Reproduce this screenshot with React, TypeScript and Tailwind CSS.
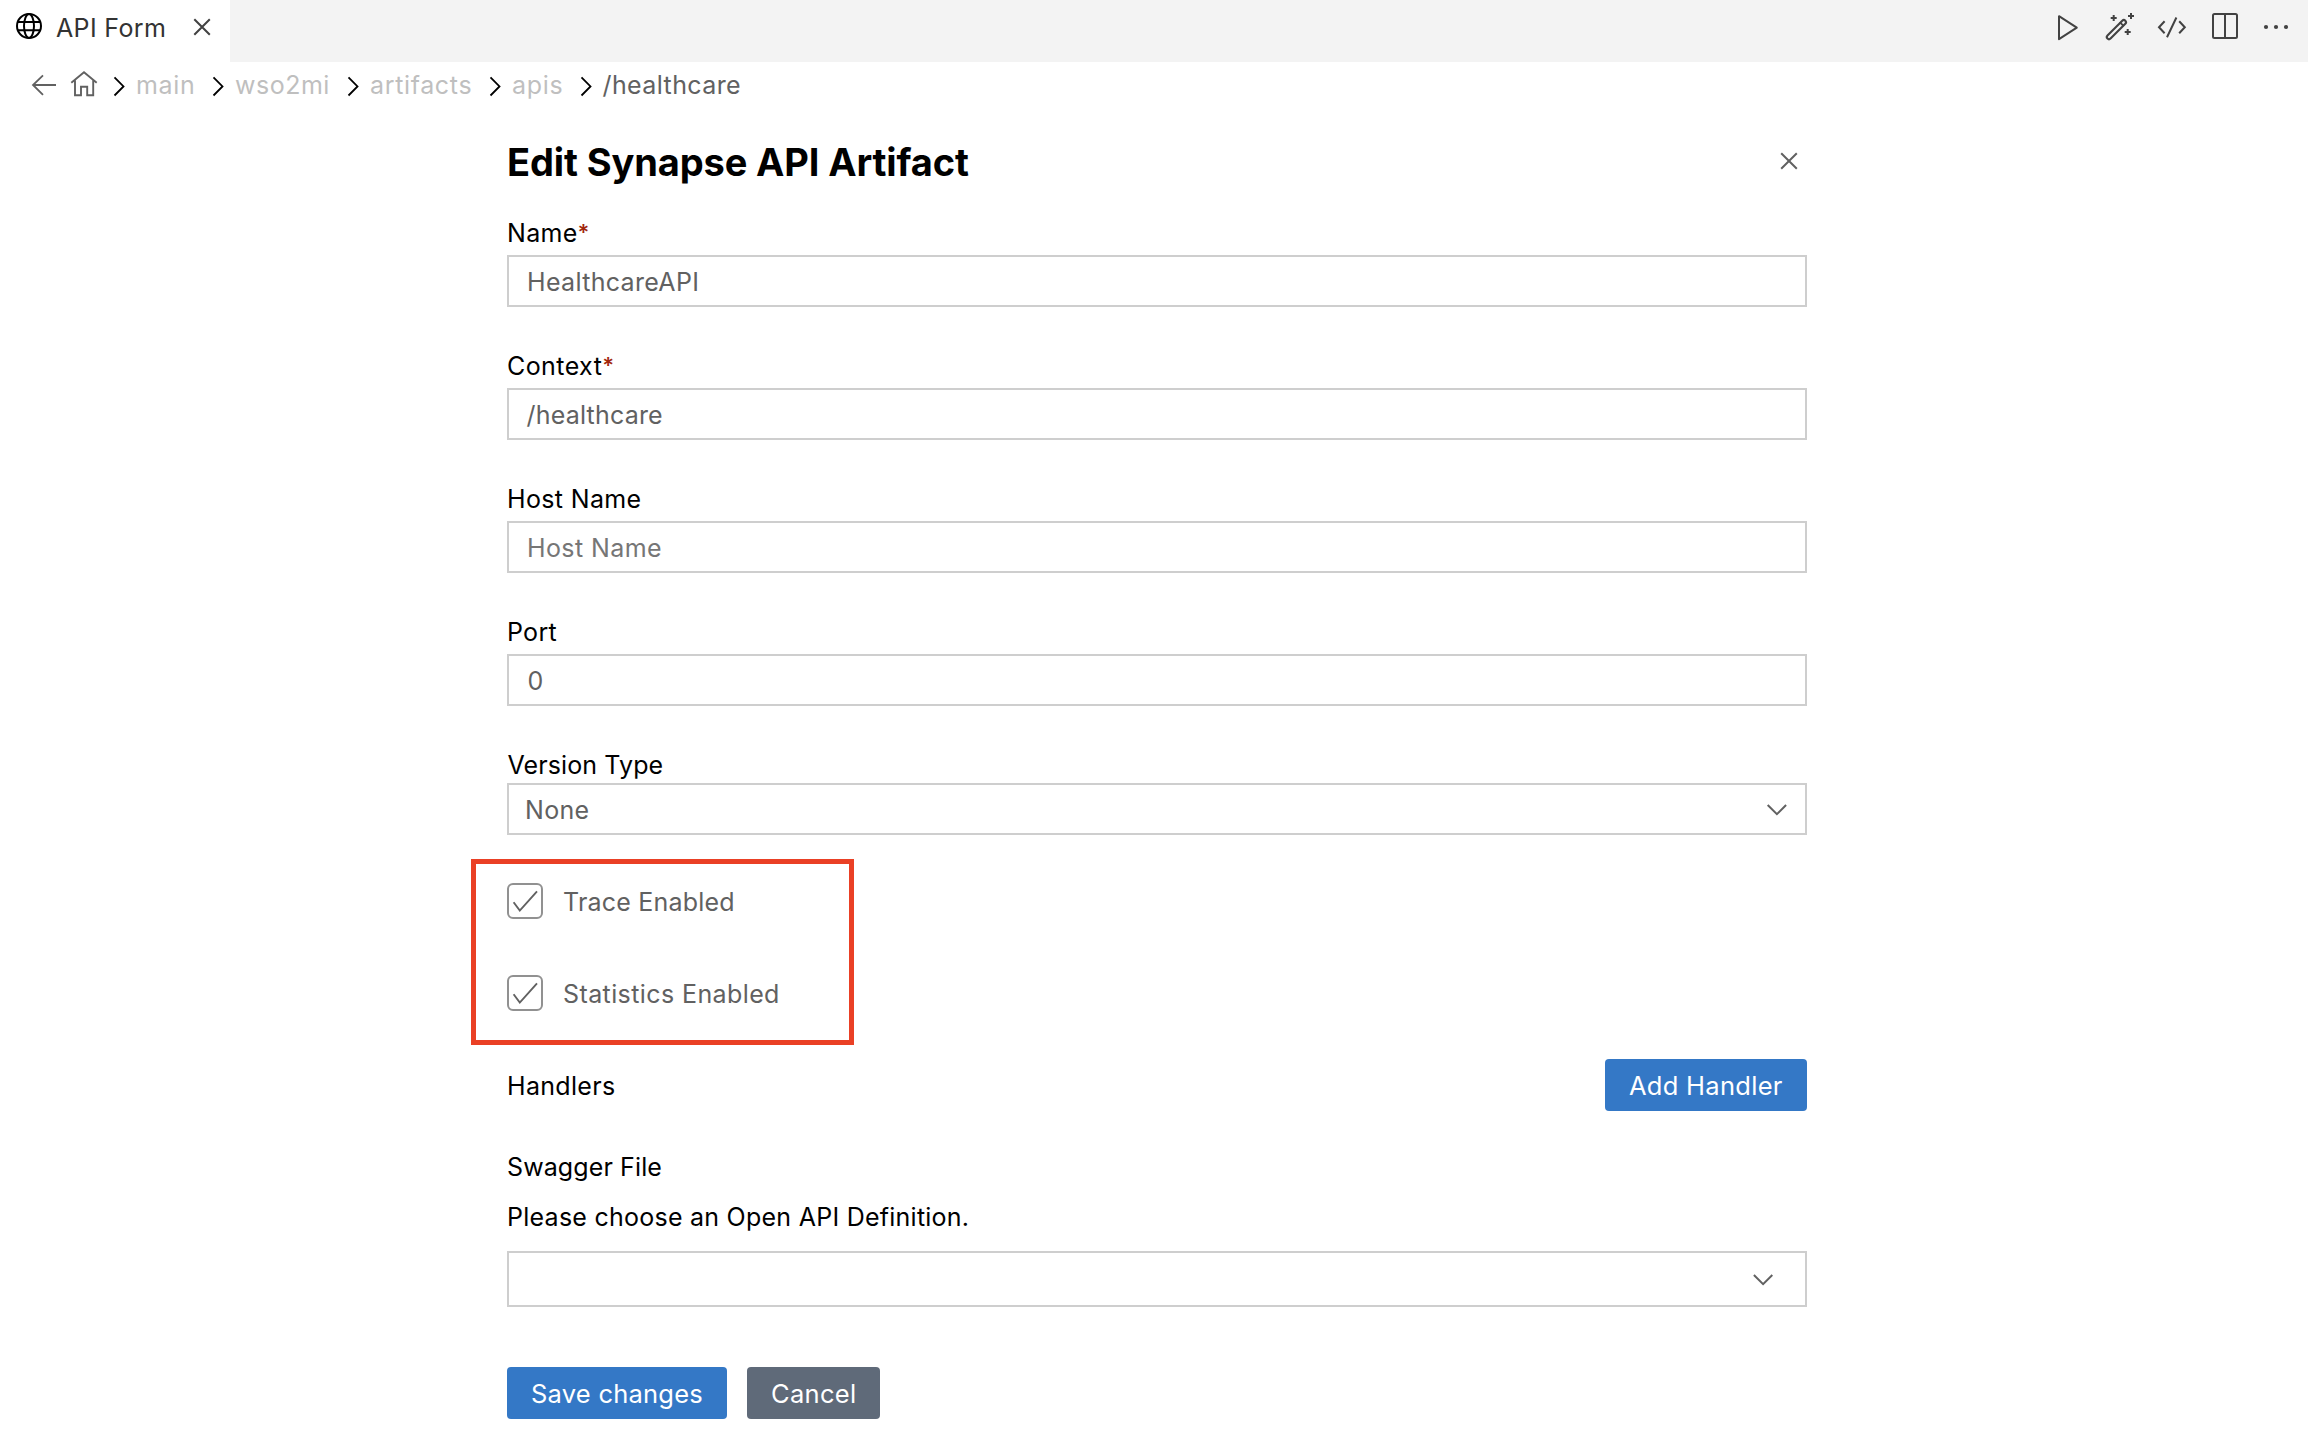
import type { ReactNode } from "react";

type IconProps = { box: string; w?: string; children: ReactNode };

// Line icon with the editor's two-pixel stroke.
function Icon({ box, w = "h-8 w-8", children }: IconProps) {
  return (
    <svg viewBox={box} className={`${w} shrink-0`} fill="none" stroke="currentColor" strokeWidth="2">
      {children}
    </svg>
  );
}

function Tab() {
  return (
    <div className="flex h-full w-[230px] items-start bg-white">
      <div className="ml-[13px] mt-[10px] text-black">
        <Icon box="13 10 32 32">
          <circle cx="29" cy="26" r="12" />
          <ellipse cx="29" cy="26" rx="5" ry="12" />
          <path d="M17.6 22h22.8M17.6 30.3h22.8" />
        </Icon>
      </div>
      <span className="ml-[11px] mt-3 w-[130px] leading-8 tracking-[0.35px] text-[#333333]">API Form</span>
      <div className="mt-[11px] text-[#424242]">
        <Icon box="186 11 32 32">
          <path d="M194.3 19.3l15.5 15.5M209.8 19.3l-15.5 15.5" />
        </Icon>
      </div>
    </div>
  );
}

function Toolbar() {
  return (
    <div className="mt-[11px] flex gap-5 pr-4 text-[#424242]">
      <Icon box="2052 11 32 32">
        <path d="M2059 16.2v23l17.8-11.5z" strokeLinejoin="round" />
      </Icon>
      <Icon box="2104 11 32 32">
        <path d="M2109 37l14.8-14.8" strokeWidth="6.4" strokeLinecap="round" />
        <path d="M2109 37l14.8-14.8" stroke="#f3f3f3" strokeWidth="2.2" strokeLinecap="round" />
        <path d="M2119.8 22.2l3.8 3.8" strokeWidth="1.8" />
        <path d="M2113.7 15v6M2110.7 18h6M2131 13v6M2128 16h6M2127.7 29v6M2124.7 32h6" />
      </Icon>
      <Icon box="2156 11 32 32">
        <path d="M2164.6 21.3l-5.6 6 5.6 6M2179.2 21.3l5.6 6-5.6 6M2176.4 17.5l-9.4 19.7" />
      </Icon>
      <Icon box="2208 11 32 32">
        <rect x="2213" y="14" width="24" height="24" rx="1.5" />
        <path d="M2225 14v24" />
      </Icon>
      <Icon box="2260 11 32 32">
        <g fill="currentColor" stroke="none">
          <circle cx="2266" cy="27" r="2.1" />
          <circle cx="2276" cy="27" r="2.1" />
          <circle cx="2286" cy="27" r="2.1" />
        </g>
      </Icon>
    </div>
  );
}

const crumbs = [
  { label: "main", style: "w-[75.5px] tracking-[0.7px] text-[#bfbfbf]" },
  { label: "wso2mi", style: "w-[111.5px] tracking-[0.5px] text-[#bfbfbf]" },
  { label: "artifacts", style: "w-[118.5px] tracking-[0.65px] text-[#bfbfbf]" },
  { label: "apis", style: "w-[67px] tracking-[0.7px] text-[#bfbfbf]" },
  { label: "/healthcare", style: "tracking-[0.4px] text-[#616161]" },
];

function Breadcrumb() {
  return (
    <nav className="mt-[7px] flex h-8 items-center pl-[28px] text-[#616161]">
      <Icon box="28 69 32 32">
        <path d="M43 75.3L33 85l10 9.8M33 85h23" strokeWidth="1.8" />
      </Icon>
      <div className="ml-2 mr-[13px]">
        <Icon box="68 69 32 32">
          <path d="M71.3 82.8L84 72.3l12.7 10.5M75 80.5v14.8h6v-8.5h6.2v8.5h6V80.5" strokeWidth="1.9" />
        </Icon>
      </div>
      {crumbs.map((c) => (
        <div key={c.label} className="flex items-center">
          <div className="mr-[11px] text-black">
            <Icon box="0 0 12 32" w="h-8 w-3">
              <path d="M1.5 8.3l9 9.1-9 9.1" strokeWidth="1.8" />
            </Icon>
          </div>
          <span className={`mr-[0.5px] leading-8 ${c.style}`}>{c.label}</span>
        </div>
      ))}
    </nav>
  );
}

type FieldProps = { label: string; labelStyle: string; required?: boolean; value: string; valueStyle: string };

function Field({ label, labelStyle, required, value, valueStyle }: FieldProps) {
  return (
    <div className="mb-[43px]">
      <div className="flex h-8 leading-8 text-black">
        <span className={labelStyle}>{label}</span>
        {required && <span className="relative -top-px text-[22px] font-semibold text-[#a1260d]">*</span>}
      </div>
      <div className="mt-1.5 h-[52px] border-2 border-[#cecece] pl-[18px] pt-[9px]">
        <div className={`leading-8 ${valueStyle}`}>{value}</div>
      </div>
    </div>
  );
}

function CheckRow({ label, style }: { label: string; style: string }) {
  return (
    <div className="flex h-9">
      <div className="h-9 w-9 rounded-[6px] border-2 border-[#919191] text-[#616161]">
        <svg viewBox="2 2 32 32" className="h-8 w-8" fill="none" stroke="currentColor" strokeWidth="1.9">
          <path d="M6.6 19.2l6.2 8.4L30 8.4" />
        </svg>
      </div>
      <span className={`ml-5 mt-[3px] leading-8 text-[#616161] ${style}`}>{label}</span>
    </div>
  );
}

function Button({ label, style }: { label: string; style: string }) {
  return (
    <button className={`h-[52px] rounded-[4px] pb-[9px] pt-[11px] text-left text-[25.5px] leading-8 text-white ${style}`}>
      {label}
    </button>
  );
}

export default function App() {
  return (
    <div className="h-[1454px] w-[2308px] overflow-hidden bg-white font-['Inter',sans-serif] text-[25px]">
      <header className="flex h-[62px] justify-between bg-[#f3f3f3]">
        <Tab />
        <Toolbar />
      </header>
      <Breadcrumb />

      <main className="ml-[507px] mt-[37px] w-[1300px]">
        <div className="mb-[31px] flex h-12 items-center justify-between pr-0.5">
          <h1 className="text-[38px] font-bold leading-[48px] tracking-[-0.12px] text-black">Edit Synapse API Artifact</h1>
          <div className="text-[#616161]">
            <Icon box="1773 146 32 32">
              <path d="M1781.2 153.2l15.6 15.6M1796.8 153.2l-15.6 15.6" />
            </Icon>
          </div>
        </div>

        <Field label="Name" labelStyle="tracking-[0.3px]" required value="HealthcareAPI" valueStyle="tracking-[0.32px] text-[#616161]" />
        <Field label="Context" labelStyle="tracking-[0.42px]" required value="/healthcare" valueStyle="-ml-[0.5px] tracking-[0.2px] text-[#616161]" />
        <Field label="Host Name" labelStyle="tracking-[0.35px]" value="Host Name" valueStyle="tracking-[0.4px] text-[#767676]" />
        <Field label="Port" labelStyle="tracking-[0.28px]" value="0" valueStyle="pl-[0.5px] text-[#616161]" />

        <div className="pl-[0.5px] leading-8 tracking-[0.1px] text-black">Version Type</div>
        <div className="mt-0.5 flex h-[52px] justify-between border-2 border-[#cecece] pl-4 pr-3 pt-[9px] text-[#616161]">
          <span className="leading-8 tracking-[0.3px]">None</span>
          <Icon box="1761 794 32 32">
            <path d="M1767.7 805l9.2 9.2 9.2-9.2" />
          </Icon>
        </div>

        <div className="relative mt-12 flex flex-col gap-14">
          <CheckRow label="Trace Enabled" style="tracking-[0.2px]" />
          <CheckRow label="Statistics Enabled" style="tracking-[0.4px]" />
          <div className="absolute -left-9 -top-6 h-[186px] w-[383px] border-[5px] border-[#ea4025]" />
        </div>

        <div className="mt-12 flex h-[52px] justify-between">
          <span className="mt-[11px] leading-8 tracking-[0.32px] text-black">Handlers</span>
          <Button label="Add Handler" style="w-[202px] bg-[#3478c6] pl-6 tracking-[0.28px]" />
        </div>

        <div className="mt-10 leading-8 tracking-[0.11px] text-black">Swagger File</div>
        <div className="mt-[18px] leading-8 tracking-[0.25px] text-black">Please choose an Open API Definition.</div>
        <div className="mt-[18px] flex h-14 justify-end border-2 border-[#cecece] pr-[26px] pt-[10px] text-[#616161]">
          <Icon box="1747 1263 32 32">
            <path d="M1753.9 1275l9.2 9.2 9.2-9.2" />
          </Icon>
        </div>

        <div className="mt-[60px] flex gap-5">
          <Button label="Save changes" style="w-[220px] bg-[#3478c6] pl-6 tracking-[0.24px]" />
          <Button label="Cancel" style="w-[133px] bg-[#5f6a79] pl-6 tracking-[0.3px]" />
        </div>
      </main>
    </div>
  );
}
